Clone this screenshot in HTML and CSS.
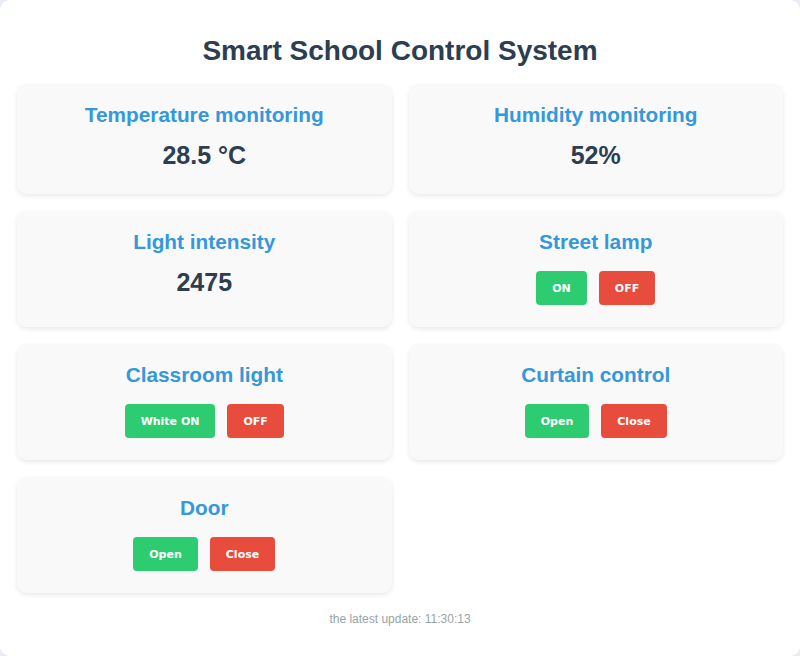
FILE: index.html
```html
<!DOCTYPE html>
<html lang="en">
<head>
<meta charset="utf-8">
<title>Smart School Control System</title>
<link rel="stylesheet" href="styles.css">
</head>
<body>
<div class="container">
  <h1 class="page-title">Smart School Control System</h1>
  <div class="grid">
    <div class="card">
      <h3 class="card-title">Temperature monitoring</h3>
      <div class="value">28.5 °C</div>
    </div>
    <div class="card">
      <h3 class="card-title">Humidity monitoring</h3>
      <div class="value">52%</div>
    </div>
    <div class="card">
      <h3 class="card-title">Light intensity</h3>
      <div class="value">2475</div>
    </div>
    <div class="card">
      <h3 class="card-title">Street lamp</h3>
      <div class="controls">
        <button class="btn btn-on">ON</button>
        <button class="btn btn-off">OFF</button>
      </div>
    </div>
    <div class="card">
      <h3 class="card-title">Classroom light</h3>
      <div class="controls">
        <button class="btn btn-on">White ON</button>
        <button class="btn btn-off">OFF</button>
      </div>
    </div>
    <div class="card">
      <h3 class="card-title">Curtain control</h3>
      <div class="controls">
        <button class="btn btn-on">Open</button>
        <button class="btn btn-off">Close</button>
      </div>
    </div>
    <div class="card">
      <h3 class="card-title">Door</h3>
      <div class="controls">
        <button class="btn btn-on">Open</button>
        <button class="btn btn-off">Close</button>
      </div>
    </div>
  </div>
  <div class="footer">the latest update: 11:30:13</div>
</div>
</body>
</html>
```
FILE: styles.css
```css
html, body {
  margin: 0;
  padding: 0;
}
body {
  background: #e9eef4;
  font-family: "Liberation Sans", Arial, sans-serif;
}
.container {
  background: #ffffff;
  border-radius: 10px;
  min-height: 100vh;
  box-sizing: border-box;
  padding: 17px 17px 20px;
}
.page-title {
  margin: 18px 0 17px;
  font-size: 28px;
  line-height: 32px;
  text-align: center;
  color: #2c3e50;
  font-weight: bold;
}
.grid {
  display: grid;
  grid-template-columns: 1fr 1fr;
  column-gap: 17px;
  row-gap: 17px;
}
.card {
  background: #f9f9f9;
  border-radius: 10px;
  box-shadow: 0 2px 5px rgba(0, 0, 0, 0.09);
  padding: 19px 20px 20px;
  text-align: center;
}
.card-title {
  margin: 0 0 14px;
  font-size: 20.8px;
  line-height: 24px;
  color: #3498db;
  font-weight: bold;
}
.value {
  font-size: 25px;
  line-height: 29px;
  font-weight: bold;
  color: #2c3e50;
  margin-bottom: 4px;
}
.controls {
  display: flex;
  justify-content: center;
  gap: 12px;
  margin-top: 17px;
  margin-bottom: 2px;
}
.btn {
  font-family: "DejaVu Sans", Verdana, sans-serif;
  font-size: 11px;
  font-weight: bold;
  color: #ffffff;
  border: none;
  border-radius: 4px;
  padding: 0 16px;
  height: 34px;
  cursor: pointer;
}
.btn-on {
  background: #2ecc71;
}
.btn-off {
  background: #e74c3c;
}
.footer {
  margin-top: 19px;
  text-align: center;
  font-size: 12px;
  line-height: 14px;
  color: #95a5a6;
}
```
